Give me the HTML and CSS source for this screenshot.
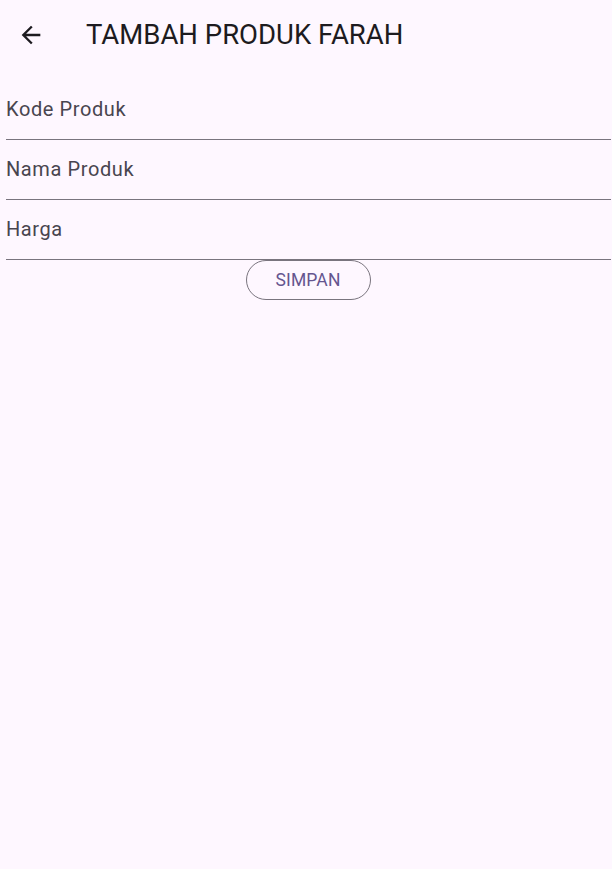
FILE: index.html
```html
<!DOCTYPE html>
<html lang="id">
<head>
<meta charset="utf-8">
<title>Tambah Produk Farah</title>
<link rel="stylesheet" href="styles.css">
</head>
<body>
<header class="appbar">
  <button class="back" aria-label="Kembali">
    <svg width="28" height="28" viewBox="0 0 24 24"><path d="M20 11H7.83l5.59-5.59L12 4l-8 8 8 8 1.41-1.41L7.83 13H20v-2z" fill="#1D1B20"/></svg>
  </button>
  <h1 class="title">TAMBAH PRODUK FARAH</h1>
</header>
<main class="form">
  <div class="field"><span class="label">Kode Produk</span></div>
  <div class="field"><span class="label">Nama Produk</span></div>
  <div class="field"><span class="label">Harga</span></div>
  <div class="actions"><button class="btn">SIMPAN</button></div>
</main>
</body>
</html>
```
FILE: styles.css
```css
* { box-sizing: border-box; }
html, body { margin: 0; padding: 0; }
body {
  background: #FEF7FF;
  font-family: Roboto, "Noto Sans", sans-serif;
  width: 612px;
  height: 869px;
}
.appbar {
  height: 70px;
  display: flex;
  align-items: center;
  padding-left: 17px;
  padding-bottom: 1px;
}
.back {
  width: 28px;
  height: 28px;
  padding: 0;
  border: 0;
  background: none;
  display: flex;
}
.title {
  margin: 0 0 0 41px;
  font-size: 27.5px;
  font-weight: 400;
  color: #1D1B20;
  letter-spacing: 0;
}
.form {
  padding: 10px 1px 0 6px;
}
.field {
  height: 60px;
  padding-top: 17px;
  border-bottom: 1px solid #79747E;
}
.label {
  display: block;
  font-size: 20px;
  line-height: 24px;
  color: #49454F;
  letter-spacing: 0.6px;
}
.actions {
  display: flex;
  justify-content: center;
}
.btn {
  height: 40px;
  width: 125px;
  border: 1px solid #79747E;
  border-radius: 20px;
  background: transparent;
  color: #65558F;
  font-family: Roboto, sans-serif;
  font-size: 17.5px;
  letter-spacing: 0.15px;
  padding: 0;
  margin-left: -1px;
}
```
